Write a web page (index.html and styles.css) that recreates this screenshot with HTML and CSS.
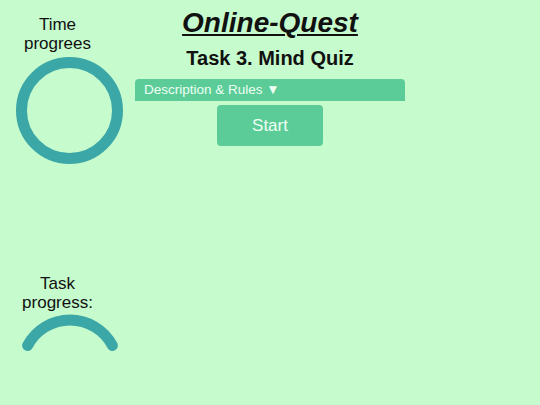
FILE: index.html
```html
<!DOCTYPE html>
<html>
<head>
<meta charset="utf-8">
<link rel="stylesheet" href="styles.css">
</head>
<body>
<div class="page">
  <aside class="side">
    <div class="label">Time<br>progrees</div>
    <svg class="timer" viewBox="0 0 140 115" width="140" height="115">
      <circle cx="69.5" cy="57.5" r="48" fill="none" stroke="#3ba7a6" stroke-width="11"/>
    </svg>
    <div class="label label-task">Task<br>progress:</div>
    <svg class="gauge" viewBox="0 0 140 60" width="140" height="60">
      <path d="M27.6 33.5 A48 48 0 0 1 112.4 33.5" fill="none" stroke="#3ba7a6" stroke-width="11" stroke-linecap="round"/>
    </svg>
  </aside>
  <main class="main">
    <h1 class="title">Online-Quest</h1>
    <h2 class="task">Task 3. Mind Quiz</h2>
    <div class="rules">Description &amp; Rules ▼</div>
    <button class="start">Start</button>
  </main>
</div>
</body>
</html>
```

FILE: styles.css
```css
html, body {
  margin: 0;
  padding: 0;
  background: #c6fbcd;
  font-family: "Liberation Sans", Arial, sans-serif;
  color: #111;
}
.page {
  display: grid;
  grid-template-columns: 135px 270px 1fr;
  width: 540px;
  height: 405px;
}
.side {
  display: flex;
  flex-direction: column;
  padding-top: 15px;
}
.label {
  width: 115px;
  text-align: center;
  font-size: 17px;
  line-height: 19px;
}
.timer, .gauge {
  display: block;
}
.label-task {
  margin-top: 106px;
}
.main {
  display: flex;
  flex-direction: column;
  align-items: center;
  padding-top: 7px;
}
.title {
  margin: 0;
  font-size: 28px;
  line-height: 32px;
  font-weight: bold;
  font-style: italic;
  text-decoration: underline;
  text-decoration-thickness: 2px;
  text-underline-offset: 2px;
}
.task {
  margin: 8px 0 0;
  font-size: 20px;
  line-height: 22px;
  font-weight: bold;
}
.rules {
  margin-top: 10px;
  align-self: stretch;
  height: 22px;
  box-sizing: border-box;
  padding-left: 9px;
  background: #5bcc98;
  border-radius: 4px 4px 0 0;
  color: #eefff3;
  font-size: 13.5px;
  line-height: 22px;
}
.start {
  margin-top: 4px;
  width: 106px;
  height: 41px;
  border: none;
  border-radius: 4px;
  background: #5bcc98;
  color: #eefff3;
  font-family: "Liberation Sans", Arial, sans-serif;
  font-size: 17px;
  padding: 0;
}
```
